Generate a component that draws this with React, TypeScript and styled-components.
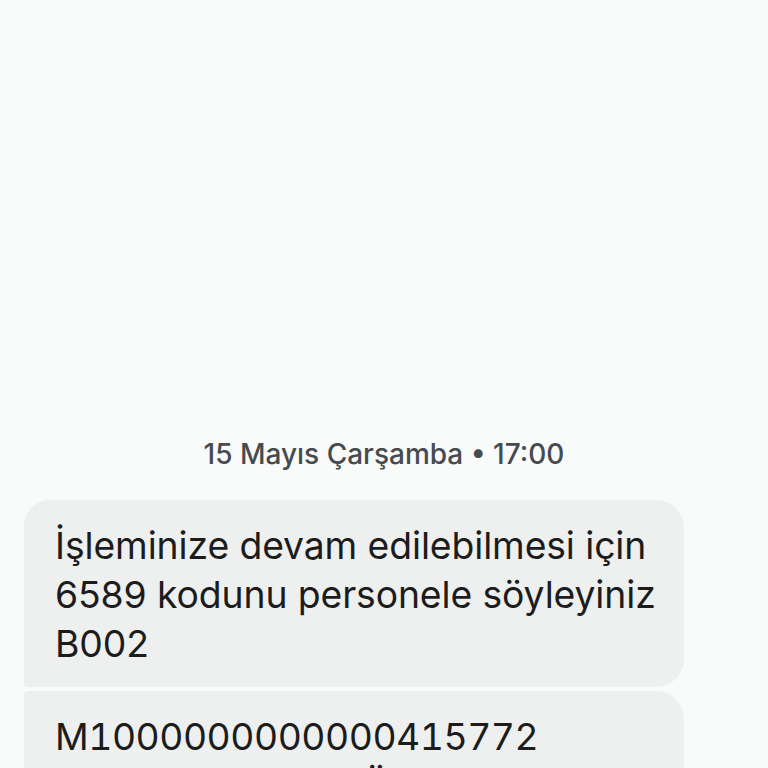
import React from "react";
import styled, { createGlobalStyle } from "styled-components";

const GlobalStyle = createGlobalStyle`
    html, body {
        margin: 0;
        padding: 0;
        background: #f9fafa;
        overflow: hidden;
    }
    body {
        font-family: Inter, Roboto, "Noto Sans", "Liberation Sans", sans-serif;
    }
`;

const Screen = styled.div`
    width: 768px;
    height: 768px;
    overflow: hidden;
    background: #f9fafa;
    display: flex;
    flex-direction: column;
    padding-top: 435px;
    box-sizing: border-box;
`;

const DateLabel = styled.div`
    text-align: center;
    font-size: 28px;
    line-height: 38px;
    font-weight: 500;
    color: #464b4f;
    margin-bottom: 27px;
`;

const Group = styled.div`
    display: flex;
    flex-direction: column;
    gap: 4px;
    padding-left: 24px;
`;

type BubbleProps = { $first?: boolean; $last?: boolean };

const Bubble = styled.div<BubbleProps>`
    width: 660px;
    box-sizing: border-box;
    padding: 21px 18px 19px 31px;
    background: #eef0f0;
    color: #1c1c1c;
    font-size: 37.3px;
    line-height: 49px;
    letter-spacing: -0.1px;
    border-radius: ${(p) => (p.$first ? "26px" : "4px")} 28px 28px ${(p) => (p.$last ? "26px" : "4px")};
`;

const Code = styled.span`
    font-feature-settings: "tnum" 1;
    letter-spacing: -0.5px;
`;

const App: React.FC = () => {
    return (
        <Screen>
            <GlobalStyle />
            <DateLabel>15 Mayıs Çarşamba • 17:00</DateLabel>
            <Group>
                <Bubble $first>
                    İşleminize devam edilebilmesi için 6589 kodunu personele söyleyiniz B002
                </Bubble>
                <Bubble $last>
                    <Code>M1000000000000415772</Code>
                    <br />
                    numaralı işlemde ÖDEME
                </Bubble>
            </Group>
        </Screen>
    );
};

export default App;
